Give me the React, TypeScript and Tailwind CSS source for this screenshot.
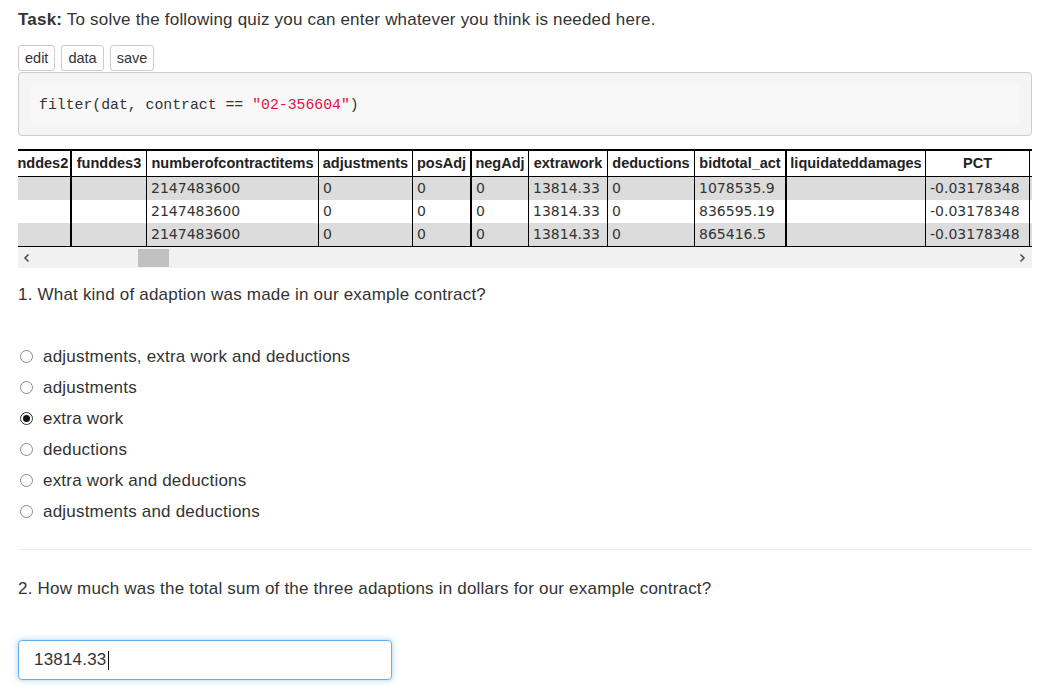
import React from 'react';

const headers = [
  'funddes2',
  'funddes3',
  'numberofcontractitems',
  'adjustments',
  'posAdj',
  'negAdj',
  'extrawork',
  'deductions',
  'bidtotal_act',
  'liquidateddamages',
  'PCT',
  '',
];

// left border of each column, written out so tailwind picks them up
const borders = [
  '',
  'border-l-2 border-black',
  'border-l border-black',
  'border-l border-black',
  'border-l border-black',
  'border-l-2 border-black',
  'border-l border-black',
  'border-l border-black',
  'border-l border-black',
  'border-l-2 border-black',
  'border-l border-black',
  'border-l border-black',
];

const rows = [
  ['', '', '2147483600', '0', '0', '0', '13814.33', '0', '1078535.9', '', '-0.03178348', ''],
  ['', '', '2147483600', '0', '0', '0', '13814.33', '0', '836595.19', '', '-0.03178348', ''],
  ['', '', '2147483600', '0', '0', '0', '13814.33', '0', '865416.5', '', '-0.03178348', ''],
];

const options = [
  'adjustments, extra work and deductions',
  'adjustments',
  'extra work',
  'deductions',
  'extra work and deductions',
  'adjustments and deductions',
];

const gridCols =
  'grid grid-cols-[68px_76px_172px_94px_58px_58px_79px_87px_91px_140px_104px_100px]';

const DataTable: React.FC = () => {
  return (
    <div className="mt-[13px]">
      <div className="w-full overflow-hidden">
        <div className="ml-[-16px] w-max border-t-2 border-b border-black">
          <div className={`${gridCols} h-[26px] border-b border-black bg-white`}>
            {headers.map((h, i) => (
              <div
                key={i}
                className={`${borders[i]} flex items-center justify-center whitespace-nowrap pt-[1px] text-[14.5px] font-bold tracking-normal text-[#222]`}
              >
                {h}
              </div>
            ))}
          </div>
          {rows.map((r, ri) => (
            <div
              key={ri}
              className={`${gridCols} h-[23px] ${ri % 2 === 0 ? 'bg-[#dcdcdc]' : 'bg-white'}`}
            >
              {r.map((c, ci) => (
                <div
                  key={ci}
                  className={`${borders[ci]} pl-[4px] whitespace-nowrap text-[14px] leading-[23px] tracking-normal text-[#333] [font-family:'DejaVu_Sans',sans-serif]`}
                >
                  {c}
                </div>
              ))}
            </div>
          ))}
        </div>
      </div>
      {/* horizontal scrollbar */}
      <div className="flex h-[21px] items-center bg-[#f1f1f1]">
        <svg className="ml-[4px] h-[10px] w-[10px]" viewBox="0 0 10 10">
          <path d="M6.5 1.5 L3 5 L6.5 8.5" fill="none" stroke="#505050" strokeWidth="1.6" />
        </svg>
        <div className="ml-[106px] h-[18px] w-[31px] bg-[#c1c1c1]" />
        <div className="flex-1" />
        <svg className="mr-[5px] h-[10px] w-[10px]" viewBox="0 0 10 10">
          <path d="M3.5 1.5 L7 5 L3.5 8.5" fill="none" stroke="#505050" strokeWidth="1.6" />
        </svg>
      </div>
    </div>
  );
};

const Radio: React.FC<{ checked: boolean }> = ({ checked }) => (
  <span
    className={`ml-[2px] flex h-[13px] w-[13px] shrink-0 items-center justify-center rounded-full border bg-white ${
      checked ? 'border-[#333]' : 'border-[#8a8a8a]'
    }`}
  >
    {checked && <span className="h-[7px] w-[7px] rounded-full bg-[#111]" />}
  </span>
);

export default function App() {
  return (
    <div className="min-h-screen bg-white px-[18px] text-[17px] tracking-[0.2px] text-[#333] [font-family:'Liberation_Sans',Arial,sans-serif]">
      <div className="w-[1014px]">
        <p className="pt-[9px] leading-[22px]">
          <b className="font-bold">Task:</b> To solve the following quiz you can enter whatever you think is needed here.
        </p>

        <div className="mt-[14px] flex gap-[6px]">
          {['edit', 'data', 'save'].map((b) => (
            <button
              key={b}
              className="h-[26px] rounded-[3px] border border-[#ccc] bg-white px-[6px] text-[14.5px] leading-none tracking-normal text-[#333]"
            >
              {b}
            </button>
          ))}
        </div>

        <div className="mt-[1px] h-[64px] rounded-[4px] border border-[#ccc] bg-[#f5f5f5] px-[12px] pt-[12px] pb-[11px]">
          <div className="flex h-[39px] items-center bg-[#f8f8f8] pl-[8px] pt-[1px] text-[14.8px] tracking-normal text-[#333] [font-family:'Liberation_Mono',monospace]">
            <span className="whitespace-pre">
              filter(dat, contract == <span className="text-[#dd1144]">"02-356604"</span>)
            </span>
          </div>
        </div>

        <DataTable />

        <p className="mt-[16px] leading-[22px]">1. What kind of adaption was made in our example contract?</p>

        <div className="mt-[35px] flex flex-col">
          {options.map((o) => (
            <label key={o} className="flex h-[31px] items-center gap-[10px]">
              <Radio checked={o === 'extra work'} />
              <span>{o}</span>
            </label>
          ))}
        </div>

        <hr className="mt-[22px] border-0 border-t border-[#eee]" />

        <p className="mt-[28px] leading-[22px]">
          2. How much was the total sum of the three adaptions in dollars for our example contract?
        </p>

        <div className="mt-[40px] flex h-[40px] w-[374px] items-center rounded-[4px] border border-[#66afe9] bg-white pl-[15px] shadow-[0_0_6px_rgba(102,175,233,0.6)]">
          <span>13814.33</span>
          <span className="ml-px h-[19px] w-px bg-black" />
        </div>
      </div>
    </div>
  );
}
